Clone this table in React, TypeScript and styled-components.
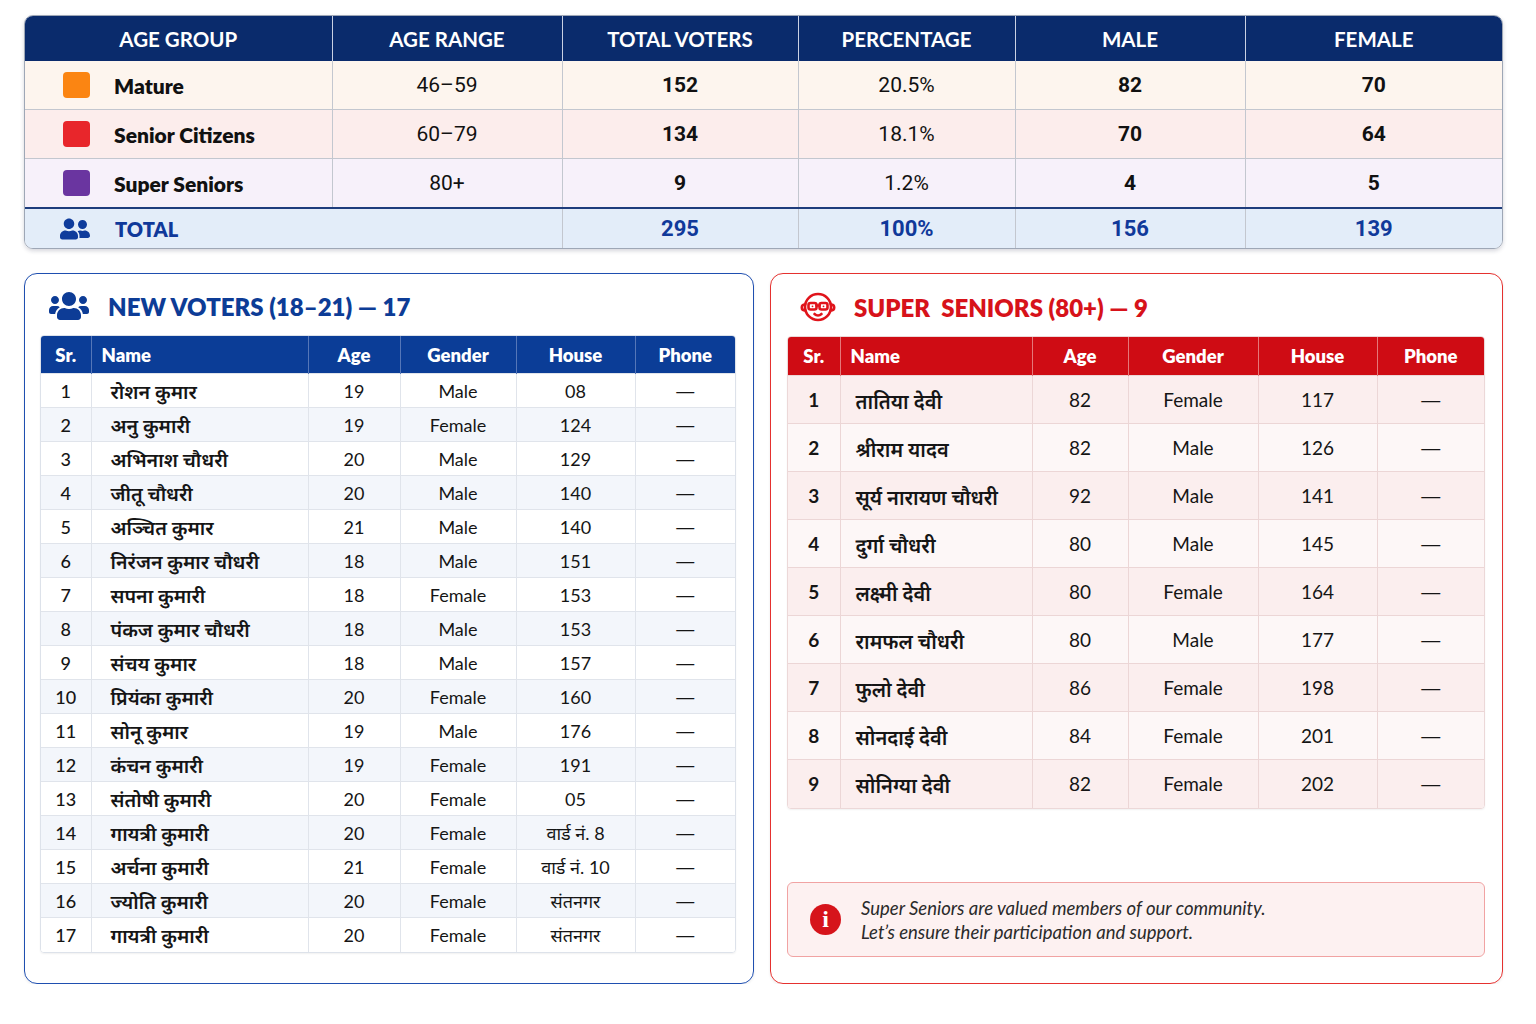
import React from "react";
import styled, { createGlobalStyle } from "styled-components";
import { FaUsers, FaUserFriends } from "react-icons/fa";

const GlobalStyle = createGlobalStyle`
	html, body {
		margin: 0;
		padding: 0;
		background: #ffffff;
	}
	body {
		font-family: "Lato", "Noto Sans Devanagari", "Lohit Devanagari", "FreeSans", "Noto Sans", sans-serif;
		color: #111111;
	}
`;

const summaryRows = [
	{ label: "Mature", range: "46–59", total: "152", pct: "20.5%", male: "82", female: "70", swatch: "#fb8512", bg: "#fdf5ee" },
	{ label: "Senior Citizens", range: "60–79", total: "134", pct: "18.1%", male: "70", female: "64", swatch: "#e8262b", bg: "#fcedec" },
	{ label: "Super Seniors", range: "80+", total: "9", pct: "1.2%", male: "4", female: "5", swatch: "#6a35a0", bg: "#f7f1fa" },
];

const newVoters = [
	["1", "रोशन कुमार", "19", "Male", "08"],
	["2", "अनु कुमारी", "19", "Female", "124"],
	["3", "अभिनाश चौधरी", "20", "Male", "129"],
	["4", "जीतू चौधरी", "20", "Male", "140"],
	["5", "अञ्चित कुमार", "21", "Male", "140"],
	["6", "निरंजन कुमार चौधरी", "18", "Male", "151"],
	["7", "सपना कुमारी", "18", "Female", "153"],
	["8", "पंकज कुमार चौधरी", "18", "Male", "153"],
	["9", "संचय कुमार", "18", "Male", "157"],
	["10", "प्रियंका कुमारी", "20", "Female", "160"],
	["11", "सोनू कुमार", "19", "Male", "176"],
	["12", "कंचन कुमारी", "19", "Female", "191"],
	["13", "संतोषी कुमारी", "20", "Female", "05"],
	["14", "गायत्री कुमारी", "20", "Female", "वार्ड नं. 8"],
	["15", "अर्चना कुमारी", "21", "Female", "वार्ड नं. 10"],
	["16", "ज्योति कुमारी", "20", "Female", "संतनगर"],
	["17", "गायत्री कुमारी", "20", "Female", "संतनगर"],
];

const superSeniors = [
	["1", "तातिया देवी", "82", "Female", "117"],
	["2", "श्रीराम यादव", "82", "Male", "126"],
	["3", "सूर्य नारायण चौधरी", "92", "Male", "141"],
	["4", "दुर्गा चौधरी", "80", "Male", "145"],
	["5", "लक्ष्मी देवी", "80", "Female", "164"],
	["6", "रामफल चौधरी", "80", "Male", "177"],
	["7", "फुलो देवी", "86", "Female", "198"],
	["8", "सोनदाई देवी", "84", "Female", "201"],
	["9", "सोनिग्या देवी", "82", "Female", "202"],
];

// bald face with glasses, drawn to match the red outline icon
const SeniorIcon = () => (
	<svg width="40" height="40" viewBox="0 0 40 40" fill="none" stroke="#e0141b" strokeWidth="2.6" strokeLinecap="round" strokeLinejoin="round">
		<circle cx="20" cy="20" r="13" />
		<path d="M7.2 17.5 C4.5 17.5 3.8 19 3.8 20.5 C3.8 22.3 5 23.5 7.4 23.5" />
		<path d="M32.8 17.5 C35.5 17.5 36.2 19 36.2 20.5 C36.2 22.3 35 23.5 32.6 23.5" />
		<rect x="10.5" y="16" width="8" height="6.5" rx="2" />
		<rect x="21.5" y="16" width="8" height="6.5" rx="2" />
		<path d="M18.5 18.5 L21.5 18.5" />
		<path d="M16.5 27 C18.5 28.8 21.5 28.8 23.5 27" />
		<circle cx="14.5" cy="19.3" r="0.9" fill="#e0141b" stroke="none" />
		<circle cx="25.5" cy="19.3" r="0.9" fill="#e0141b" stroke="none" />
	</svg>
);

const App = () => {
	return (
		<Page>
			<GlobalStyle />
			<SummaryWrap>
				<SummaryTable>
					<colgroup>
						<col style={{ width: 307 }} />
						<col style={{ width: 230 }} />
						<col style={{ width: 236 }} />
						<col style={{ width: 217 }} />
						<col style={{ width: 230 }} />
						<col />
					</colgroup>
					<thead>
						<tr>
							<SummaryTh>AGE GROUP</SummaryTh>
							<SummaryTh>AGE RANGE</SummaryTh>
							<SummaryTh>TOTAL VOTERS</SummaryTh>
							<SummaryTh>PERCENTAGE</SummaryTh>
							<SummaryTh>MALE</SummaryTh>
							<SummaryTh>FEMALE</SummaryTh>
						</tr>
					</thead>
					<tbody>
						{summaryRows.map((row) => (
							<SummaryRow key={row.label} $bg={row.bg}>
								<GroupCell>
									<GroupLabel>
										<Swatch $color={row.swatch} />
										{row.label}
									</GroupLabel>
								</GroupCell>
								<SummaryTd>{row.range}</SummaryTd>
								<SummaryTd $bold>{row.total}</SummaryTd>
								<SummaryTd>{row.pct}</SummaryTd>
								<SummaryTd $bold>{row.male}</SummaryTd>
								<SummaryTd $bold>{row.female}</SummaryTd>
							</SummaryRow>
						))}
						<TotalRow>
							<TotalLabelCell colSpan={2}>
								<GroupLabel>
									<TotalIcon>
										<FaUserFriends />
									</TotalIcon>
									TOTAL
								</GroupLabel>
							</TotalLabelCell>
							<TotalTd>295</TotalTd>
							<TotalTd>100%</TotalTd>
							<TotalTd>156</TotalTd>
							<TotalTd>139</TotalTd>
						</TotalRow>
					</tbody>
				</SummaryTable>
			</SummaryWrap>

			<Panels>
				<Panel $tone="blue">
					<PanelTitle $tone="blue">
						<TitleIcon>
							<FaUsers size={40} color="#0d3c96" />
						</TitleIcon>
						NEW VOTERS (18–21) — 17
					</PanelTitle>
					<ListWrap $tone="blue">
						<ListTable>
							<colgroup>
								<col style={{ width: 50 }} />
								<col style={{ width: 217 }} />
								<col style={{ width: 92 }} />
								<col style={{ width: 116 }} />
								<col style={{ width: 119 }} />
								<col />
							</colgroup>
							<thead>
								<tr>
									<ListTh $tone="blue" $h={37}>Sr.</ListTh>
									<ListTh $tone="blue" $h={37} $left>Name</ListTh>
									<ListTh $tone="blue" $h={37}>Age</ListTh>
									<ListTh $tone="blue" $h={37}>Gender</ListTh>
									<ListTh $tone="blue" $h={37}>House</ListTh>
									<ListTh $tone="blue" $h={37}>Phone</ListTh>
								</tr>
							</thead>
							<tbody>
								{newVoters.map((r, i) => (
									<ListRow key={r[0]} $bg={i % 2 === 0 ? "#ffffff" : "#f3f6fb"}>
										<SrTd $tone="blue" $h={34} $size={18}>{r[0]}</SrTd>
										<NameTd $tone="blue" $h={34} $size={19.5} $pad={19}>{r[1]}</NameTd>
										<ListTd $tone="blue" $h={34} $size={18}>{r[2]}</ListTd>
										<ListTd $tone="blue" $h={34} $size={18}>{r[3]}</ListTd>
										<ListTd $tone="blue" $h={34} $size={18}>{r[4]}</ListTd>
										<DashTd $tone="blue" $h={34} $size={18}>—</DashTd>
									</ListRow>
								))}
							</tbody>
						</ListTable>
					</ListWrap>
				</Panel>

				<Panel $tone="red">
					<PanelTitle $tone="red">
						<TitleIcon>
							<SeniorIcon />
						</TitleIcon>
						SUPER&nbsp; SENIORS (80+) — 9
					</PanelTitle>
					<ListWrap $tone="red">
						<ListTable>
							<colgroup>
								<col style={{ width: 52 }} />
								<col style={{ width: 192 }} />
								<col style={{ width: 96 }} />
								<col style={{ width: 130 }} />
								<col style={{ width: 119 }} />
								<col />
							</colgroup>
							<thead>
								<tr>
									<ListTh $tone="red" $h={38}>Sr.</ListTh>
									<ListTh $tone="red" $h={38} $left>Name</ListTh>
									<ListTh $tone="red" $h={38}>Age</ListTh>
									<ListTh $tone="red" $h={38}>Gender</ListTh>
									<ListTh $tone="red" $h={38}>House</ListTh>
									<ListTh $tone="red" $h={38}>Phone</ListTh>
								</tr>
							</thead>
							<tbody>
								{superSeniors.map((r, i) => (
									<ListRow key={r[0]} $bg={i % 2 === 0 ? "#fbeeee" : "#fdf7f7"}>
										<SrTd $tone="red" $h={48} $size={19} $bold>{r[0]}</SrTd>
										<NameTd $tone="red" $h={48} $size={20} $pad={15}>{r[1]}</NameTd>
										<ListTd $tone="red" $h={48} $size={19}>{r[2]}</ListTd>
										<ListTd $tone="red" $h={48} $size={19}>{r[3]}</ListTd>
										<ListTd $tone="red" $h={48} $size={19}>{r[4]}</ListTd>
										<DashTd $tone="red" $h={48} $size={19}>—</DashTd>
									</ListRow>
								))}
							</tbody>
						</ListTable>
					</ListWrap>
					<InfoBox>
						<InfoDot>i</InfoDot>
						<InfoText>
							Super Seniors are valued members of our community.
							<br />
							Let’s ensure their participation and support.
						</InfoText>
					</InfoBox>
				</Panel>
			</Panels>
		</Page>
	);
};

const Page = styled.div`
	width: 1536px;
	box-sizing: border-box;
	padding: 15px 33px 0 24px;
	display: flex;
	flex-direction: column;
	gap: 24px;
`;

const SummaryWrap = styled.div`
	border: 1px solid #9ea7b6;
	border-radius: 9px;
	overflow: hidden;
	box-shadow: 0 2px 4px rgba(20, 30, 60, 0.18);
`;

const SummaryTable = styled.table`
	width: 100%;
	border-collapse: collapse;
	table-layout: fixed;
`;

const SummaryTh = styled.th`
	height: 45px;
	padding: 0;
	background: #0a2b6c;
	color: #ffffff;
	font-family: "Lato", sans-serif;
	font-weight: 700;
	font-size: 20.5px;
	text-align: center;
	border-left: 1px solid #c9d1e3;
	&:first-child {
		border-left: none;
	}
`;

const SummaryRow = styled.tr<{ $bg: string }>`
	background: ${(p) => p.$bg};
	& > td {
		border-top: 1px solid #c3c7cf;
	}
	&:first-child > td {
		border-top: none;
	}
`;

const SummaryTd = styled.td<{ $bold?: boolean }>`
	height: 48px;
	padding: 0;
	text-align: center;
	font-family: "Roboto", "Liberation Sans", sans-serif;
	font-size: 21px;
	font-weight: ${(p) => (p.$bold ? 700 : 400)};
	color: #111111;
	border-left: 1px solid #c3c7cf;
`;

const GroupCell = styled.td`
	height: 48px;
	padding: 0 0 0 38px;
	font-family: "Lato", sans-serif;
	font-size: 21px;
	font-weight: 800;
	color: #111111;
`;

const GroupLabel = styled.div`
	display: flex;
	align-items: center;
	gap: 24px;
`;

const Swatch = styled.span<{ $color: string }>`
	width: 27px;
	height: 26px;
	border-radius: 4px;
	background: ${(p) => p.$color};
	flex: none;
`;

const TotalRow = styled.tr`
	background: #e3edf9;
	& > td {
		border-top: 2px solid #1e3d7c;
	}
`;

const TotalLabelCell = styled.td`
	height: 39px;
	padding: 0 0 0 35px;
	font-family: "Lato", sans-serif;
	font-size: 20px;
	font-weight: 800;
	color: #10399a;
`;

const TotalIcon = styled.span`
	display: flex;
	width: 31px;
	font-size: 30px;
	color: #0f3c9c;
`;

const TotalTd = styled.td`
	padding: 0;
	text-align: center;
	font-family: "Roboto", "Liberation Sans", sans-serif;
	font-size: 22px;
	font-weight: 700;
	color: #10399a;
	border-left: 1px solid #c3c7cf;
`;

const Panels = styled.div`
	display: grid;
	grid-template-columns: 730px 733px;
	gap: 16px;
`;

const Panel = styled.section<{ $tone: "blue" | "red" }>`
	height: 711px;
	box-sizing: border-box;
	border: 1.5px solid ${(p) => (p.$tone === "blue" ? "#1f4fb0" : "#e5312f")};
	border-radius: 13px;
	padding: ${(p) => (p.$tone === "blue" ? "10px 17px 0 15px" : "11px 17px 26px 16px")};
	display: flex;
	flex-direction: column;
	box-shadow: 0 1px 3px rgba(0, 0, 0, 0.08);
`;

const PanelTitle = styled.h2<{ $tone: "blue" | "red" }>`
	margin: 0 0 7px 0;
	height: 44px;
	display: flex;
	align-items: center;
	gap: ${(p) => (p.$tone === "blue" ? "18px" : "15px")};
	padding-left: ${(p) => (p.$tone === "blue" ? "8px" : "10px")};
	font-family: "Lato", sans-serif;
	font-weight: 800;
	font-size: 24px;
	color: ${(p) => (p.$tone === "blue" ? "#0d3c96" : "#d7121a")};
`;

const TitleIcon = styled.span`
	display: flex;
	width: 42px;
	justify-content: center;
`;

const ListWrap = styled.div<{ $tone: "blue" | "red" }>`
	border: 1px solid ${(p) => (p.$tone === "blue" ? "#dde2ea" : "#ecd8d8")};
	border-radius: 4px;
	overflow: hidden;
	box-shadow: 0 1px 2px rgba(0, 0, 0, 0.06);
`;

const ListTable = styled.table`
	width: 100%;
	border-collapse: collapse;
	table-layout: fixed;
`;

const ListTh = styled.th<{ $tone: "blue" | "red"; $h: number; $left?: boolean }>`
	height: ${(p) => p.$h}px;
	padding: ${(p) => (p.$left ? "0 0 0 10px" : "0")};
	text-align: ${(p) => (p.$left ? "left" : "center")};
	background: ${(p) => (p.$tone === "blue" ? "#0b3d97" : "#cf0c14")};
	color: #ffffff;
	font-family: "Lato", sans-serif;
	font-weight: 800;
	font-size: 18.5px;
	border-left: 1px solid ${(p) => (p.$tone === "blue" ? "#5576b8" : "#e5787a")};
	&:first-child {
		border-left: none;
	}
`;

const ListRow = styled.tr<{ $bg: string }>`
	background: ${(p) => p.$bg};
`;

const ListTd = styled.td<{ $tone: "blue" | "red"; $h: number; $size: number }>`
	height: ${(p) => p.$h}px;
	box-sizing: border-box;
	padding: 0;
	line-height: 22px;
	text-align: center;
	font-family: "Lato", "Noto Sans Devanagari", "Lohit Devanagari", "FreeSans", sans-serif;
	font-size: ${(p) => p.$size}px;
	color: #151515;
	border-top: 1px solid ${(p) => (p.$tone === "blue" ? "#e0e4eb" : "#ecd6d6")};
	border-left: 1px solid ${(p) => (p.$tone === "blue" ? "#e0e4eb" : "#ecd6d6")};
	&:first-child {
		border-left: none;
	}
`;

const SrTd = styled(ListTd)<{ $bold?: boolean }>`
	font-weight: ${(p) => (p.$bold ? 700 : 500)};
`;

const NameTd = styled(ListTd)<{ $pad: number }>`
	text-align: left;
	padding: 3px 0 0 ${(p) => p.$pad}px;
	font-weight: 600;
`;

const DashTd = styled(ListTd)`
	font-family: "Liberation Sans", sans-serif;
`;

const InfoBox = styled.div`
	margin-top: auto;
	height: 75px;
	box-sizing: border-box;
	border: 1px solid #f1a3a3;
	border-radius: 6px;
	background: #fdf1f1;
	display: flex;
	align-items: center;
	gap: 20px;
	padding-left: 22px;
`;

const InfoDot = styled.span`
	width: 31px;
	height: 31px;
	border-radius: 50%;
	background: #d6141b;
	color: #ffffff;
	display: flex;
	align-items: center;
	justify-content: center;
	font-family: "Liberation Serif", serif;
	font-weight: 700;
	font-size: 24px;
	flex: none;
`;

const InfoText = styled.p`
	margin: 0;
	font-family: "Lato", sans-serif;
	font-style: italic;
	font-size: 18.5px;
	line-height: 24px;
	color: #2a2a2a;
`;

export default App;
